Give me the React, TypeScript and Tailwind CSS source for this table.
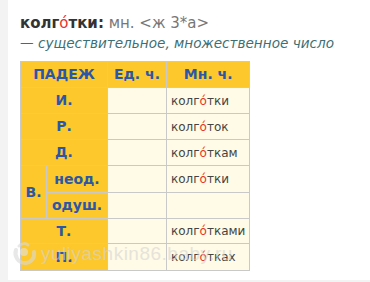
const font = { fontFamily: '"DejaVu Sans", Verdana, sans-serif' };

function Word({ pre, post }: { pre: string; post: string }) {
  return (
    <span>
      {pre}
      <span className="text-[#e8332a]">о́</span>
      {post}
    </span>
  );
}

const head = "border border-[#c9c9c9] bg-[#fcc82c] text-[#2c56a6] font-bold text-center";
const cell = "border border-[#c9c9c9] bg-[#fffbe6] text-[12px] text-[#444] px-[4px]";

export default function App() {
  return (
    <div className="w-[370px] h-[282px] bg-[#f3f3f3] pl-[8px] pb-[2px]" style={font}>
      <div className="relative h-full bg-white pl-[12px] pt-[13px]">
        <div className="text-[15px] leading-[20px] text-[#333]">
          <b>
            колг<span className="text-[#e8332a] font-normal">о́</span>тки:
          </b>{" "}
          <span className="text-[#777]">мн. &lt;ж 3*а&gt;</span>
        </div>
        <div className="text-[13.6px] leading-[20px] italic text-[#3d6f74]">
          — существительное, множественное число
        </div>
        <table className="mt-[8px] border-collapse border border-[#c9c9c9] text-[14px]">
          <tbody>
            <tr className="h-[26px]">
              <th colSpan={2} className={`${head} w-[87px]`}>ПАДЕЖ</th>
              <th className={`${head} w-[59px]`}>Ед. ч.</th>
              <th className={`${head} w-[82px]`}>Мн. ч.</th>
            </tr>
            <tr className="h-[26px]">
              <th colSpan={2} className={head}>И.</th>
              <td className={cell}></td>
              <td className={cell}><Word pre="колг" post="тки" /></td>
            </tr>
            <tr className="h-[26px]">
              <th colSpan={2} className={head}>Р.</th>
              <td className={cell}></td>
              <td className={cell}><Word pre="колг" post="ток" /></td>
            </tr>
            <tr className="h-[26px]">
              <th colSpan={2} className={head}>Д.</th>
              <td className={cell}></td>
              <td className={cell}><Word pre="колг" post="ткам" /></td>
            </tr>
            <tr className="h-[27px]">
              <th rowSpan={2} className={`${head} w-[26px]`}>В.</th>
              <th className={`${head} w-[61px]`}>неод.</th>
              <td className={cell}></td>
              <td className={cell}><Word pre="колг" post="тки" /></td>
            </tr>
            <tr className="h-[26px]">
              <th className={head}>одуш.</th>
              <td className={cell}></td>
              <td className={cell}></td>
            </tr>
            <tr className="h-[25px]">
              <th colSpan={2} className={head}>Т.</th>
              <td className={cell}></td>
              <td className={cell}><Word pre="колг" post="тками" /></td>
            </tr>
            <tr className="h-[27px]">
              <th colSpan={2} className={head}>П.</th>
              <td className={cell}></td>
              <td className={cell}><Word pre="колг" post="тках" /></td>
            </tr>
          </tbody>
        </table>
        <div className="absolute left-[2px] top-[240px] flex items-center gap-[3px] opacity-60 pointer-events-none">
          <svg width="28" height="28" viewBox="0 0 28 28" fill="none">
            <path d="M6 10 C4 16 8 23 15 23 C21 23 25 18 24 12" stroke="#d9d9d9" strokeWidth="4" strokeLinecap="round" />
            <circle cx="14" cy="12" r="4" fill="#e3e3e3" />
            <path d="M9 6 C11 3 16 3 18 5" stroke="#d9d9d9" strokeWidth="3" strokeLinecap="round" />
          </svg>
          <span className="text-[19px] text-[#d4d4d4] tracking-[0.5px]" style={{ fontFamily: '"Liberation Sans", Arial, sans-serif' }}>
            yuliyashkin86.baby.ru
          </span>
        </div>
      </div>
    </div>
  );
}
